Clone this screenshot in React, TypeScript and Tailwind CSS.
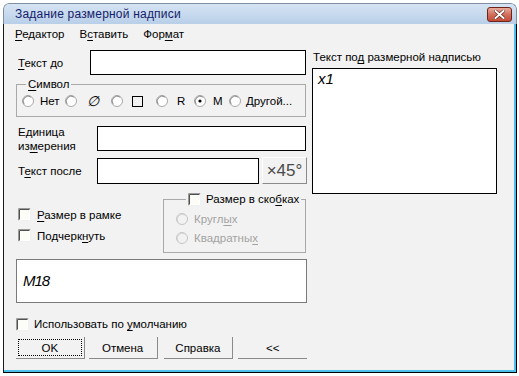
import React from 'react';

const font = { fontFamily: '"Liberation Sans", Arial, sans-serif' };

const Radio = ({ checked = false, disabled = false }: { checked?: boolean; disabled?: boolean }) => (
  <svg width="12" height="12" viewBox="0 0 12 12" className="shrink-0">
    <circle cx="6" cy="6" r="5.5" fill={disabled ? '#f2f2f2' : '#ffffff'} stroke={disabled ? '#c4c4c4' : '#a8a8a8'} />
    <path d="M2.2 9.2 A5 5 0 0 1 9.2 2.2" fill="none" stroke={disabled ? '#d0d0d0' : '#8a8a8a'} strokeWidth="1" />
    {checked && <circle cx="6" cy="6" r="1.6" fill="#000" />}
  </svg>
);

const Check = () => (
  <svg width="13" height="13" viewBox="0 0 13 13" className="shrink-0">
    <rect x="0" y="0" width="13" height="13" fill="#ffffff" />
    <path d="M0.5 12.5 V0.5 H12.5" fill="none" stroke="#9a9a9a" />
    <path d="M1.5 11.5 V1.5 H11.5" fill="none" stroke="#505050" />
    <path d="M0.5 12.5 H12.5 V0.5" fill="none" stroke="#f0f0f0" />
    <rect x="2" y="2" width="9" height="9" fill="#fdfdf8" />
  </svg>
);

const U = ({ children }: { children: React.ReactNode }) => <span className="underline underline-offset-2">{children}</span>;

const App = () => {
  return (
    <div className="w-[519px] h-[376px] bg-white pt-[3px] pl-[3px] text-[11.5px] text-black leading-[14px]" style={font}>
      <div className="w-[514px] h-[370px] flex flex-col rounded-t-[6px] overflow-hidden">
        {/* Title bar */}
        <div className="h-[21px] shrink-0 flex items-center justify-between pl-[11px] pr-[4px] border-t border-x border-[#7f8fa3] rounded-t-[6px] bg-gradient-to-b from-[#d6e4f3] to-[#b8cfe8]">
          <span className="text-[12px] text-[#15206a] tracking-[0.2px]">Задание размерной надписи</span>
          <div className="w-[25px] h-[15px] rounded-[3px] border border-[#6e2318] bg-gradient-to-b from-[#e8ab9c] via-[#d2705e] to-[#c24a36] flex items-center justify-center">
            <svg width="11" height="9" viewBox="0 0 11 9">
              <path d="M1.5 1 L9.5 8 M9.5 1 L1.5 8" stroke="#5a1a10" strokeWidth="3.2" strokeLinecap="square" />
              <path d="M1.5 1 L9.5 8 M9.5 1 L1.5 8" stroke="#ffffff" strokeWidth="2" strokeLinecap="square" />
            </svg>
          </div>
        </div>

        {/* Client */}
        <div className="flex-1 border-l border-l-[#1a1a1a] border-r border-r-black border-b border-b-black">
          <div className="h-full bg-[#f2f2f2] border-r-2 border-r-[#4cc0ea] border-b-2 border-b-[#4cc0ea] flex flex-col">
            {/* Menu */}
            <div className="h-[20px] flex items-center pl-[11px] gap-[15px]">
              <span><U>Р</U>едактор</span>
              <span>В<U>с</U>тавить</span>
              <span>Фор<U>м</U>ат</span>
            </div>

            <div className="flex pl-[11px]">
              {/* Left column */}
              <div className="w-[292px] flex flex-col">
                <div className="mt-[6px] h-[25px] flex items-center">
                  <span className="w-[75px] pl-[3px]"><U>Т</U>екст до</span>
                  <div className="w-[216px] h-[25px] bg-white border border-black" />
                </div>

                <fieldset className="mt-[2px] ml-[1px] w-[290px] border border-[#a9a9a9] pl-[5px] pb-[5px]">
                  <legend className="ml-[4px] px-[2px] leading-[14px]"><U>С</U>имвол</legend>
                  <div className="h-[20px] flex items-center">
                    <div className="w-[43px] flex items-center gap-[6px]"><Radio /><span>Нет</span></div>
                    <div className="w-[46px] flex items-center gap-[10px]"><Radio /><span className="italic text-[14px]">∅</span></div>
                    <div className="w-[45px] flex items-center gap-[9px]"><Radio /><span className="w-[11px] h-[11px] border border-black" /></div>
                    <div className="w-[38px] flex items-center gap-[9px]"><Radio /><span>R</span></div>
                    <div className="w-[35px] flex items-center gap-[7px]"><Radio checked /><span>M</span></div>
                    <div className="flex items-center gap-[5px]"><Radio /><span>Другой...</span></div>
                  </div>
                </fieldset>

                <div className="mt-[9px] h-[25px] flex items-center">
                  <span className="w-[82px] pl-[3px] leading-[14px]">Единица<br />из<U>м</U>ерения</span>
                  <div className="w-[209px] h-[25px] bg-white border border-black" />
                </div>

                <div className="mt-[6px] h-[27px] flex items-center">
                  <span className="w-[82px] pl-[3px]">Т<U>е</U>кст после</span>
                  <div className="w-[162px] h-[26px] mt-[1px] bg-white border border-black" />
                  <div className="ml-[3px] w-[45px] h-[27px] flex items-center justify-center border border-t-white border-l-white border-r-[#8a8a8a] border-b-[#8a8a8a] text-[17px] text-[#4a4a4a]">×45°</div>
                </div>

                <div className="mt-[8px] flex">
                  <div className="flex flex-col pt-[12px] pl-[3px]">
                    <div className="h-[21px] flex items-center gap-[6px]"><Check /><span><U>Р</U>азмер в рамке</span></div>
                    <div className="h-[21px] flex items-center gap-[6px]"><Check /><span>Подчерк<U>н</U>уть</span></div>
                  </div>
                  <fieldset className="ml-auto mr-[1px] w-[143px] border border-[#a9a9a9] pl-[12px] pb-[5px]">
                    <legend className="ml-[10px] px-[2px] flex items-center gap-[5px] leading-[14px] whitespace-nowrap"><Check /><span>Размер в ско<U>б</U>ках</span></legend>
                    <div className="mt-[3px] h-[19px] flex items-center gap-[6px] text-[#a3a3a3]"><Radio disabled /><span>Кругл<U>ы</U>х</span></div>
                    <div className="h-[19px] flex items-center gap-[6px] text-[#a3a3a3]"><Radio disabled /><span>Квадратны<U>х</U></span></div>
                  </fieldset>
                </div>

                <div className="mt-[6px] ml-[1px] w-[291px] h-[44px] bg-white border border-[#7a7a7a] flex items-center pl-[6px]">
                  <span className="italic text-[15px] tracking-[-1px]">M18</span>
                </div>

                <div className="mt-[11px] h-[20px] flex items-center gap-[5px] pl-[1px]">
                  <Check /><span>Использовать по <U>у</U>молчанию</span>
                </div>

                <div className="mt-[3px] h-[22px] flex">
                  <div className="ml-[1px] w-[69px] h-full border-r border-b border-[#8a8a8a] p-[2px]">
                    <div className="h-full border border-dotted border-black flex items-center justify-center">OK</div>
                  </div>
                  <div className="ml-[4px] w-[69px] h-full border-r border-b border-[#8a8a8a] flex items-center justify-center">Отмена</div>
                  <div className="ml-[6px] w-[70px] h-full border-r border-b border-[#8a8a8a] flex items-center justify-center">Справка</div>
                  <div className="ml-[5px] w-[69px] h-full border-b border-[#8a8a8a] flex items-center justify-center">&lt;&lt;</div>
                </div>
              </div>

              {/* Right column */}
              <div className="ml-[5px] w-[185px] flex flex-col">
                <div className="mt-[6px] h-[14px] pl-[1px] whitespace-nowrap">Текст по<U>д</U> размерной надписью</div>
                <div className="mt-[4px] w-[185px] h-[126px] bg-white border border-black pl-[5px] pt-[3px]">
                  <span className="italic text-[15px]">x1</span>
                </div>
              </div>
            </div>
          </div>
        </div>
      </div>
    </div>
  );
};

export default App;
